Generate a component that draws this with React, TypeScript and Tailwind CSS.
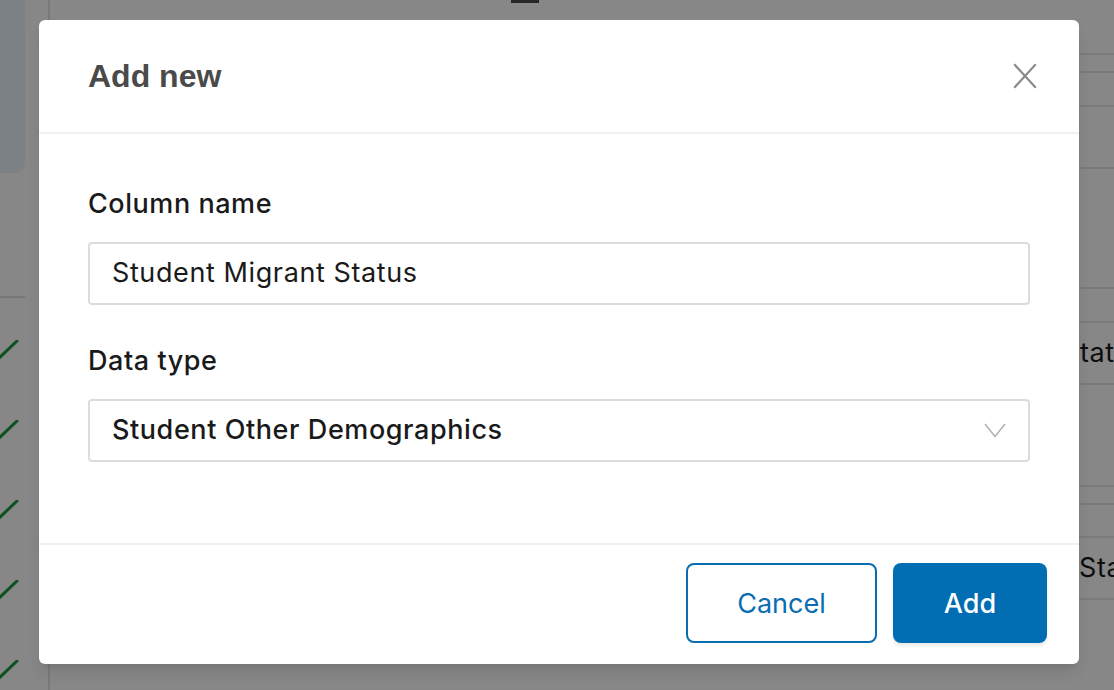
const inter = { fontFamily: 'Inter, "Noto Sans", sans-serif' };

function CloseIcon() {
  return (
    <svg width="24" height="26" viewBox="0 0 24 26" fill="none" stroke="#8a8a8a" strokeWidth="2.2" strokeLinecap="square">
      <path d="M2 2 L22 24" />
      <path d="M22 2 L2 24" />
    </svg>
  );
}

function Chevron() {
  return (
    <svg width="22" height="15" viewBox="0 0 22 15" fill="none" stroke="#b3b3b3" strokeWidth="1.6">
      <path d="M1 1 L11 13.5 L21 1" />
    </svg>
  );
}

function Tick() {
  return (
    <svg width="20" height="20" viewBox="0 0 20 20" fill="none" stroke="#1a9a3f" strokeWidth="3" strokeLinecap="round">
      <path d="M-2 19 L17 1" />
    </svg>
  );
}

// rows of the table that lies behind the dialog, on the right
const rightRows = [
  { h: 55 },
  { h: 18 },
  { h: 34 },
  { h: 62 },
  { h: 120 },
  { h: 34 },
  { h: 62, text: 'tatus', pad: 'pl-[1px]' },
  { h: 102 },
  { h: 18 },
  { h: 33 },
  { h: 62, text: 'Status', pad: 'pl-0' },
];

function Background() {
  return (
    <div className="absolute inset-0 flex bg-white" style={inter}>
      <div className="w-[50px] shrink-0 border-r-2 border-[#e4e4e4] flex flex-col">
        <div className="w-[25px] h-[173px] bg-[#eaf4fc] rounded-br-[10px]" />
        <div className="w-[25px] h-[125px] border-b-2 border-[#e2e2e2]" />
        <div className="flex flex-col gap-[60px] pt-[42px]">
          {[0, 1, 2, 3, 4].map((i) => (
            <Tick key={i} />
          ))}
        </div>
      </div>
      <div className="flex-1 flex flex-col items-center">
        <div className="ml-[-80px] w-[28px] h-[3px] bg-[#4a4a4a]" />
      </div>
      <div className="w-[35px] shrink-0 flex flex-col overflow-hidden">
        {rightRows.map((r, i) => (
          <div
            key={i}
            className={`shrink-0 border-b-2 border-[#e6e6e6] flex items-center text-[27px] tracking-[0.6px] text-[#1a1a1a] whitespace-nowrap ${r.pad ?? ''}`}
            style={{ height: r.h }}
          >
            {r.text}
          </div>
        ))}
      </div>
    </div>
  );
}

export default function App() {
  return (
    <div className="relative w-[1114px] h-[690px] overflow-hidden">
      <Background />
      <div className="absolute inset-0 bg-black/[0.47]" />

      <div
        className="absolute left-[39px] top-[20px] w-[1040px] h-[644px] bg-white rounded-md shadow-lg flex flex-col"
        style={inter}
      >
        <div className="h-[114px] shrink-0 flex items-center justify-between pl-[49px] pr-[42px] border-b-2 border-[#f0f0f0]">
          <h2
            className="text-[32px] font-bold text-[#4a4a4a] pb-[1px]"
            style={{ fontFamily: '"Liberation Sans", Arial, sans-serif' }}
          >
            Add new
          </h2>
          <CloseIcon />
        </div>

        <div className="flex-1 px-[49px] pt-[55px]">
          <label className="block text-[27px] tracking-[0.55px] leading-[30px] font-medium text-[#1a1a1a] mb-[23px]">
            Column name
          </label>
          <div className="h-[63px] border-2 border-[#dcdcdc] rounded-[4px] flex items-center px-[22px] text-[27px] tracking-[0.6px] text-[#1a1a1a]">
            Student Migrant Status
          </div>

          <label className="block text-[27px] tracking-[0.55px] leading-[30px] font-medium text-[#1a1a1a] mt-[41px] mb-[23px]">
            Data type
          </label>
          <div className="h-[63px] border-2 border-[#dcdcdc] rounded-[4px] flex items-center justify-between pl-[22px] pr-[22px] text-[27px] tracking-[0.58px] font-medium text-[#1a1a1a]">
            <span>Student Other Demographics</span>
            <Chevron />
          </div>
        </div>

        <div className="h-[121px] shrink-0 border-t-2 border-[#f0f0f0] flex items-start justify-end gap-[16px] pt-[18px] pr-[32px]">
          <button className="w-[191px] h-[80px] pt-[3px] border-2 border-[#0a6db0] rounded-lg text-[#0a6db0] text-[27px]">
            Cancel
          </button>
          <button className="w-[154px] h-[80px] pt-[3px] bg-[#016db2] rounded-lg text-white text-[27px] font-medium shadow-[0_3px_3px_rgba(0,0,0,0.08)]">
            Add
          </button>
        </div>
      </div>
    </div>
  );
}
